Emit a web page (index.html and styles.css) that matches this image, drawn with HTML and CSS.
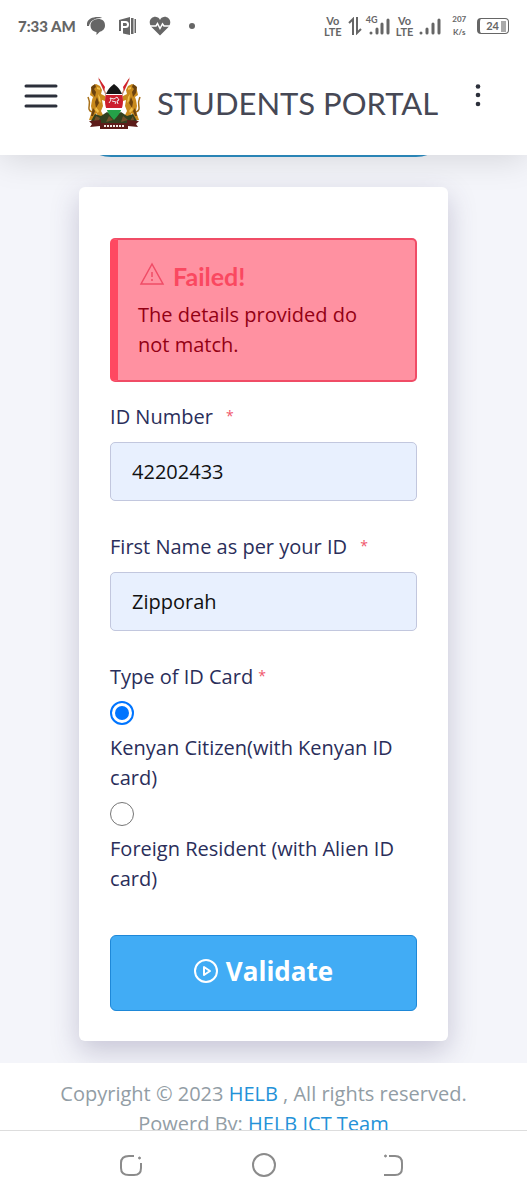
FILE: index.html
```
<!DOCTYPE html>
<html lang="en">
<head>
  <meta charset="UTF-8">
  <title>Students Portal</title>
  <meta name="viewport" content="width=device-width, initial-scale=1.0">
  <link rel="stylesheet" href="styles.css">
</head>
<body>

  <!-- phone status bar -->
  <div class="status-bar">
    <div class="status-group">
      <span class="clock">7:33 AM</span>
      <svg width="20" height="20" viewBox="0 0 20 20" fill="#666">
        <path d="M0 10C-1 4 4 1 11 1c2 0 3 .4 4 1C7 2 3 5 2 10z"/>
        <path d="M11 3c5 0 7 2.500 7 6.500S15 15 12.500 16L9.500 19v-3C6 15.500 3.500 13 3.500 9.500S6.500 3 11 3z"/>
      </svg>
      <svg width="20" height="20" viewBox="0 0 20 20">
        <path fill="#666" d="M1 4l11-3v18L5 17.500V15H1zM13 2h2.500v16H13zM16.500 3H18v14h-1.500z"/>
        <path fill="none" stroke="#fff" stroke-width="2" d="M4 16V6h3.500a2 2 0 0 1 0 5H4"/>
      </svg>
      <svg width="22" height="20" viewBox="0 0 22 20">
        <path fill="#666" d="M11 19.500L2.500 11C-2 5 3 .5 6.500.8 9 1 10.300 2.500 11 4c.7-1.500 2-3 4.500-3.200C19 .5 24 5 19.500 11z"/>
        <path fill="none" stroke="#fff" stroke-width="1.500" d="M1 10h6l1.500-2.500 2.500 5L13.500 8l1.500 2h6"/>
      </svg>
      <span class="status-dot"></span>
    </div>
    <div class="status-group status-right">
      <span class="volte"><span>Vo</span><span>LTE</span></span>
      <svg width="14" height="18" viewBox="0 0 14 18" fill="none" stroke="#666" stroke-width="2">
        <path d="M5 18V2L1 6M9 0v16l4-4"/>
      </svg>
      <span class="signal">
        <span class="network">4G</span>
        <svg width="22" height="17" viewBox="0 0 22 17" stroke="#666" stroke-width="3" stroke-linecap="round">
          <path d="M3 15v.1M9 11v4M14 6v9M20 2v13"/>
        </svg>
      </span>
      <span class="volte"><span>Vo</span><span>LTE</span></span>
      <svg width="22" height="17" viewBox="0 0 22 17" stroke="#666" stroke-width="3" stroke-linecap="round">
        <path d="M2 15v.1M8 11v4M14 6v9M20 2v13"/>
      </svg>
      <span class="speed">207<br>K/s</span>
      <span class="battery">24<span class="battery-level"></span></span>
    </div>
  </div>

  <header class="navbar">
    <button class="icon-button" aria-label="Menu">
      <svg width="34" height="26" viewBox="0 0 34 26" stroke="#2c303b" stroke-width="3" stroke-linecap="round">
        <path d="M2 3h30M2 13h30M2 23h30"/>
      </svg>
    </button>
    <a class="brand" href="#">
      <svg width="54" height="52" viewBox="0 0 54 52">
        <!-- spears -->
        <path d="M12 2l10 22M42 2L32 24" stroke="#c98e7c" stroke-width="1.500"/>
        <path d="M11 0l7 10-1 4zM43 0l-7 10 1 4z" fill="#d3202b"/>
        <!-- lions -->
        <g id="lion">
          <path fill="#c98a1c" d="M5 9l4-2 4 2 2 4-1 4 4 2 4-4 1 2-5 7-3-1 1 6-2 5 3 6 3 3h-6l-5-7-2 7H2l3-9-1-5 1-6 1-3-3-2z"/>
          <path fill="#6b420e" d="M4 10l4-3 1 3-2 2 2 3-1 5-3-4zM10 20l2 6-3 5-1-6zM6 31l2 3-2 5H4z"/>
          <path fill="none" stroke="#a87018" stroke-width="1.500" d="M5 35c-6-2-1-8-3-12L1 20"/>
          <path fill="#f0c04a" d="M10 10l3 1v2l-3-1zM11 17l2 3 1 6-2-2zM9 30l3 4-1 2-3-3z"/>
        </g>
        <use href="#lion" transform="translate(54 0) scale(-1 1)"/>
        <!-- mound and ribbon -->
        <path fill="#31401f" d="M4 44l4-7 6 2 6-4 7 4 7-4 6 4 6-2 4 7-9 3H13z"/>
        <path fill="#71502a" d="M9 39l4 2-2 4-4-1zM22 39l4 4-7 2zM36 39l5 4-7 2zM46 39l-3 5 4-1z"/>
        <path fill="#5c1c19" d="M2 44l12-1v3h26v-3l12 1-3 3 2 3-10-1v3H13v-3L3 50l2-3z"/>
        <path d="M17 49h20" stroke="#f2e9e4" stroke-width="2" stroke-dasharray="2 1"/>
        <!-- shield -->
        <clipPath id="shield"><path d="M27 7c5 4 9 8 9 17 0 8-4 14-9 19-5-5-9-11-9-19 0-9 4-13 9-17z"/></clipPath>
        <g clip-path="url(#shield)">
          <path fill="#151515" d="M18 6h18v12H18z"/>
          <path fill="#fff" d="M18 17h18v16H18z"/>
          <path fill="#cc1f2d" d="M18 18h18v13H18z"/>
          <path fill="#24a148" d="M18 33h18v11H18z"/>
        </g>
        <path fill="none" stroke="#eee" d="M22 26l2-3-1-2 4 1 3-2 2 3-2 1 1 3M25 24l4 1-1 2"/>
      </svg>
      <span class="brand-text">STUDENTS PORTAL</span>
    </a>
    <button class="icon-button" aria-label="More">
      <svg width="6" height="24" viewBox="0 0 6 24" fill="#2c303b">
        <circle cx="3" cy="2.500" r="2.300"/><circle cx="3" cy="11" r="2.300"/><circle cx="3" cy="20" r="2.300"/>
      </svg>
    </button>
  </header>

  <div class="content">
    <main class="wrapper">
      <div class="pill"></div>
      <form class="card">
        <div class="alert" role="alert">
          <h4 class="alert-title">
            <svg width="27" height="26" viewBox="0 0 27 26" fill="none" stroke="#f04c66" stroke-width="1.500">
              <path d="M14 4L3 24h22z"/><path d="M14 12v5M14 19v2"/>
            </svg>
            Failed!
          </h4>
          <p class="alert-text">The details provided do not match.</p>
        </div>

        <div class="field">
          <label for="id-number">ID Number <span class="required spaced">*</span></label>
          <input class="text-input" id="id-number" type="text" value="42202433">
        </div>

        <div class="field">
          <label for="first-name">First Name as per your ID <span class="required spaced">*</span></label>
          <input class="text-input" id="first-name" type="text" value="Zipporah">
        </div>

        <fieldset class="options">
          <legend>Type of ID Card <span class="required">*</span></legend>
          <input class="radio" type="radio" name="id-type" id="citizen" checked>
          <label for="citizen">Kenyan Citizen(with Kenyan ID card)</label>
          <input class="radio" type="radio" name="id-type" id="foreign">
          <label for="foreign">Foreign Resident (with Alien ID card)</label>
        </fieldset>

        <button class="validate" type="button">
          <svg width="24" height="24" viewBox="0 0 24 24" fill="none" stroke="#fff" stroke-width="2" stroke-linejoin="round">
            <circle cx="12" cy="12" r="11"/><path d="M10 8v8l6-4z"/>
          </svg>
          Validate
        </button>
      </form>
    </main>

    <footer class="footer">
      Copyright © 2023 <a href="#">HELB</a> , All rights reserved.<br>
      Powerd By: <a href="#">HELB ICT Team</a>
    </footer>
  </div>

  <!-- phone navigation keys -->
  <nav class="phone-nav">
    <button class="icon-button" aria-label="Recent apps">
      <svg width="24" height="24" viewBox="0 0 24 24" fill="none" stroke="#8b8b8b" stroke-width="2">
        <path d="M14 2H9Q1 2 1 9v5q0 7 8 7h5q7 0 7-7V9"/><circle cx="19.500" cy="4" r="1" fill="#8b8b8b" stroke-width="1"/>
      </svg>
    </button>
    <button class="icon-button" aria-label="Home">
      <svg width="26" height="26" viewBox="0 0 26 26" fill="none" stroke="#8b8b8b" stroke-width="2">
        <circle cx="13" cy="12" r="11"/>
      </svg>
    </button>
    <button class="icon-button" aria-label="Back">
      <svg width="24" height="24" viewBox="0 0 24 24" fill="none" stroke="#8b8b8b" stroke-width="2">
        <path d="M5 2h6q7 0 7 7v5q0 7-7 7H0"/><circle cx="1.500" cy="2" r="1" fill="#8b8b8b" stroke-width="1"/>
      </svg>
    </button>
  </nav>

</body>
</html>
```
FILE: styles.css
```
* {
  box-sizing: border-box;
}
body {
  margin: 0;
  height: 100vh;
  display: flex;
  flex-direction: column;
  background-color: #fff;
  color: #2a2e5a;
  font-family: "Open Sans", "Noto Sans", sans-serif;
  font-size: 20px;
  line-height: 30px;
}
a {
  color: #2492d8;
  text-decoration: none;
}
svg {
  display: block;
  flex-shrink: 0;
}
.icon-button {
  padding: 0;
  border: none;
  background: none;
  cursor: pointer;
}

/* status bar */
.status-bar {
  display: flex;
  justify-content: space-between;
  align-items: center;
  height: 52px;
  padding: 0 18px;
  color: #666;
  font-family: Lato, sans-serif;
}
.status-group {
  display: flex;
  align-items: center;
  gap: 11px;
}
.status-right {
  gap: 6px;
}
.clock {
  font-size: 15px;
  font-weight: 900;
}
.status-dot {
  width: 6px;
  height: 6px;
  margin-left: 7px;
  border-radius: 50%;
  background-color: #666;
}
.volte {
  display: flex;
  flex-direction: column;
  align-items: center;
  font-size: 11px;
  font-weight: bold;
  line-height: 11px;
}
.signal {
  position: relative;
}
.network {
  position: absolute;
  top: -3px;
  left: -2px;
  font-size: 9px;
  font-weight: bold;
  line-height: 9px;
}
.speed {
  margin: 0 5px;
  font-size: 8px;
  font-weight: bold;
  line-height: 13px;
  text-align: center;
}
.battery {
  display: flex;
  align-items: center;
  gap: 2px;
  height: 16px;
  padding: 0 2px 0 6px;
  border: 1px solid #666;
  border-left-width: 3px;
  border-radius: 4px;
  font-size: 11px;
  font-weight: bold;
}
.battery-level {
  width: 5px;
  height: 11px;
  background-color: #aaa;
}

/* header */
.navbar {
  position: relative;
  z-index: 1;
  display: flex;
  align-items: center;
  height: 103px;
  padding: 0 46px 16px 24px;
  background-color: #fff;
  box-shadow: 0 4px 32px rgba(0, 0, 0, 0.13);
  clip-path: inset(0 0 -60px 0);
}
.brand {
  display: flex;
  align-items: center;
  gap: 16px;
  margin: 14px auto 0 29px;
  color: #464855;
}
.brand-text {
  font-family: Lato, sans-serif;
  font-size: 31px;
}

/* page */
.content {
  flex: 1;
  min-height: 0;
  overflow: hidden;
  background-color: #f4f5fa;
}
.wrapper {
  width: 70%;
  margin: 0 auto 22px;
}
.pill {
  height: 70px;
  margin: -68px 0 30px;
  border: 2px solid #2d8fc4;
  border-radius: 32px;
}
.card {
  padding: 51px 31px 30px;
  border-radius: 6px;
  background-color: #fff;
  box-shadow: 0 10px 28px rgba(62, 57, 107, 0.25);
}
.alert {
  margin-bottom: 20px;
  padding: 20px 36px 20px 20px;
  border: 2px solid #f04c66;
  border-left: 8px solid #ff4961;
  border-radius: 5px;
  background-color: #ff91a1;
  color: #930014;
}
.alert-title {
  display: flex;
  gap: 8px;
  margin: 0 0 8px;
  color: #fa4860;
  font-family: Lato, sans-serif;
  font-size: 25px;
  line-height: 32px;
}
.alert-text {
  margin: 0;
}
.field {
  margin-bottom: 31px;
}
.field label {
  display: block;
  margin-bottom: 10px;
}
.required {
  color: #f0566c;
  font-size: 14px;
  line-height: 14px;
  vertical-align: 3px;
}
.spaced {
  margin-left: 8px;
}
.text-input {
  display: block;
  width: 100%;
  height: 59px;
  padding: 0 21px;
  border: 1px solid #c2c7de;
  border-radius: 5px;
  background-color: #e8f0fe;
  color: #111;
  font: inherit;
}
.options {
  min-width: 0;
  margin: 0 0 41px;
  padding: 0;
  border: none;
}
.options legend {
  padding: 0;
}
.options label {
  display: block;
}
.radio {
  appearance: none;
  display: block;
  width: 24px;
  height: 24px;
  margin: 9px 0 8px;
  border: 1px solid #767676;
  border-radius: 50%;
}
.radio:checked {
  padding: 3px;
  border: 2px solid #0075ff;
  background-color: #0075ff;
  background-clip: content-box;
}
.validate {
  display: flex;
  justify-content: center;
  align-items: center;
  gap: 8px;
  width: 100%;
  height: 76px;
  padding: 0 0 4px;
  border: 1px solid #1e88d8;
  border-radius: 6px;
  background-color: #41acf5;
  color: #fff;
  font-family: inherit;
  font-size: 26px;
  font-weight: bold;
  cursor: pointer;
}
.footer {
  position: relative;
  padding: 16px 24px;
  background-color: #fff;
  color: #929da5;
  text-align: center;
}

/* navigation keys */
.phone-nav {
  display: flex;
  justify-content: center;
  align-items: center;
  gap: 107px;
  height: 70px;
  border-top: 1px solid #ddd;
}
```
